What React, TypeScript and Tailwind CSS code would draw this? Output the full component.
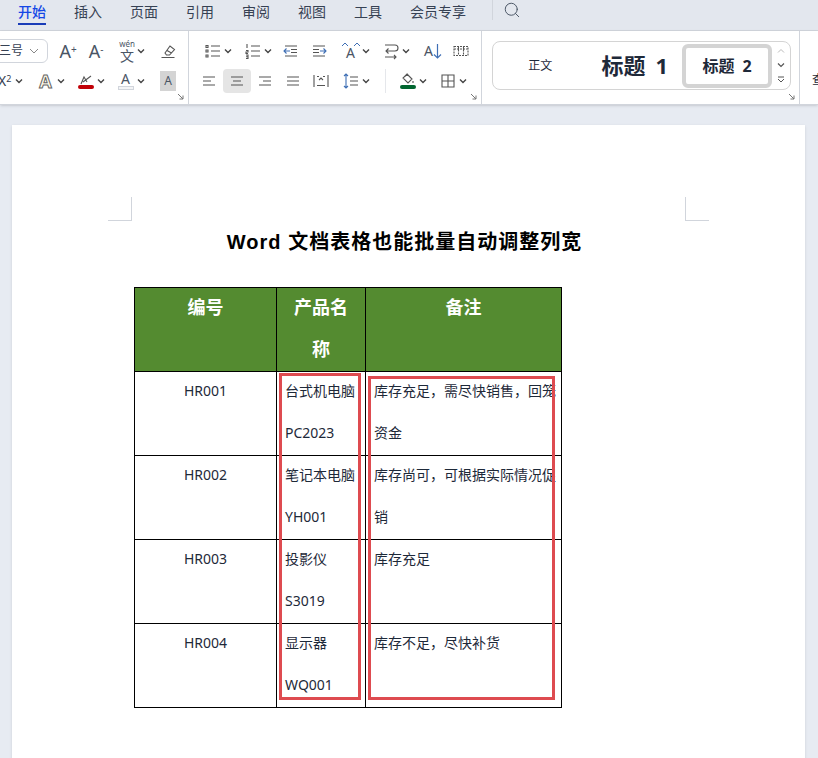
import type { ReactNode } from 'react'
import { Search } from 'lucide-react'

const tabs = ['插入', '页面', '引用', '审阅', '视图', '工具', '会员专享']

const rows = [
  { id: 'HR001', name: ['台式机电脑', 'PC2023'], note: ['库存充足，需尽快销售，回笼', '资金'] },
  { id: 'HR002', name: ['笔记本电脑', 'YH001'], note: ['库存尚可，可根据实际情况促', '销'] },
  { id: 'HR003', name: ['投影仪', 'S3019'], note: ['库存充足'] },
  { id: 'HR004', name: ['显示器', 'WQ001'], note: ['库存不足，尽快补货'] },
]

function Caret() {
  return (
    <svg width="8" height="8" viewBox="0 0 8 8" fill="none" stroke="#444" strokeWidth="1.4">
      <path d="M1 2.5 4 5.5 7 2.5" />
    </svg>
  )
}

function Glyph({ children }: { children: ReactNode }) {
  return (
    <svg width="18" height="18" viewBox="0 0 18 18" fill="none" stroke="#555" strokeWidth="1.1">
      {children}
    </svg>
  )
}

// icon with a small dropdown caret
function Drop({ children }: { children: ReactNode }) {
  return (
    <div className="flex w-10 items-center justify-center gap-px">
      <div className="flex h-5 w-5 items-center justify-center">{children}</div>
      <Caret />
    </div>
  )
}

function Tool({ children, active }: { children: ReactNode; active?: boolean }) {
  return (
    <div className={active ? 'flex h-6 w-7 items-center justify-center rounded bg-neutral-200' : 'flex h-6 w-7 items-center justify-center'}>
      {children}
    </div>
  )
}

function Lines({ d }: { d: string }) {
  return (
    <Glyph>
      <path d={d} />
    </Glyph>
  )
}

function Launcher() {
  return (
    <svg className="absolute right-1 bottom-1" width="7" height="7" viewBox="0 0 7 7" fill="none" stroke="#777" strokeWidth="1">
      <path d="M1 1 6 6M6 2.5V6H2.500" />
    </svg>
  )
}

function Ribbon() {
  return (
    <div className="flex h-[74px] overflow-hidden border-b border-gray-300 bg-white shadow-sm">
      {/* font group */}
      <div className="relative flex w-[189px] shrink-0 flex-col gap-1.5 border-r border-gray-300 pt-2">
        <div className="flex h-6 items-center">
          <div className="-ml-4 flex h-6 w-16 items-center justify-between rounded-md border border-gray-300 pl-3.5 pr-2 text-xs text-gray-700">
            <span>三号</span>
            <svg width="10" height="10" viewBox="0 0 10 10" fill="none" stroke="#888" strokeWidth="1">
              <path d="M1 3 5 7 9 3" />
            </svg>
          </div>
          <div className="ml-1.5 flex">
            <Tool>
              <span className="text-lg leading-6 text-gray-600">A<sup className="text-[10px]">+</sup></span>
            </Tool>
            <Tool>
              <span className="text-lg leading-6 text-gray-600">A<sup className="text-[10px]">-</sup></span>
            </Tool>
          </div>
          <div className="flex w-11 items-center justify-center gap-0.5">
            <div className="flex flex-col items-center text-gray-600">
              <span className="text-[8px] leading-2">wén</span>
              <span className="pt-px text-sm leading-3.5">文</span>
            </div>
            <Caret />
          </div>
          <Tool>
            <Glyph>
              <path d="M6 11 11 4 15.500 7.500 10.500 13H7.500ZM8 8.500 12.500 11M2.500 15.500H15.500" />
            </Glyph>
          </Tool>
        </div>
        <div className="flex h-6 items-center">
          <div className="-ml-0.5 flex w-8 items-center gap-1 text-gray-700">
            <span className="text-sm">X<sup className="text-[9px]">2</sup></span>
            <Caret />
          </div>
          <Drop>
            <span className="text-lg font-bold text-amber-50 [-webkit-text-stroke:1px_#666]">A</span>
          </Drop>
          <Drop>
            <div className="flex flex-col items-center">
              <svg width="16" height="11" viewBox="0 0 16 11" fill="none" stroke="#555" strokeWidth="1.1">
                <path d="M3 10 6 3 9 8M5 8 13 2" />
              </svg>
              <div className="h-1 w-4 rounded-sm bg-red-700" />
            </div>
          </Drop>
          <Drop>
            <div className="flex flex-col items-center leading-none">
              <span className="text-sm leading-3.5 text-gray-600">A</span>
              <div className="h-1 w-4 border border-gray-300 bg-gray-100" />
            </div>
          </Drop>
          <div className="ml-1 flex h-5 w-7 items-center justify-center">
            <span className="flex h-5 w-4 items-center justify-center bg-neutral-300 text-xs text-gray-600">A</span>
          </div>
        </div>
        <Launcher />
      </div>

      {/* paragraph group */}
      <div className="relative flex w-[293px] shrink-0 flex-col gap-1.5 border-r border-gray-300 pl-2 pt-2">
        <div className="flex h-6 items-center">
          <Drop>
            <Lines d="M7 4H16M7 9H16M7 14H16M2 3.500H4V5.500H2ZM2 8H4V10H2ZM2 13H4V15H2Z" />
          </Drop>
          <Drop>
            <Glyph>
              <path d="M7 4H16M7 9H16M7 14H16M3 2V6M2 8.500H4V10H2V11.500H4M2 13H4V16.500H2M2 14.700H4" />
            </Glyph>
          </Drop>
          <Tool>
            <Glyph>
              <path d="M3 4H15M9 7.500H15M9 10.500H15M3 14H15" />
              <path d="M8 9H2M4.500 6.500 2 9 4.500 11.500" stroke="#3f6fb5" />
            </Glyph>
          </Tool>
          <Tool>
            <Glyph>
              <path d="M3 4H15M3 7.500H9M3 10.500H9M3 14H15" />
              <path d="M10 9H16M13.500 6.500 16 9 13.500 11.500" stroke="#3f6fb5" />
            </Glyph>
          </Tool>
          <div className="ml-0.5 flex">
            <Drop>
              <div className="relative flex h-5 w-5 items-end justify-center">
                <span className="text-sm leading-4 text-gray-600">A</span>
                <svg className="absolute top-0 left-0" width="20" height="7" viewBox="0 0 20 7" fill="none" stroke="#3f6fb5" strokeWidth="1">
                  <path d="M1 5 4 2 7 5M13 5 16 2 19 5" />
                </svg>
              </div>
            </Drop>
            <Drop>
              <Lines d="M3 3H13Q16 3 16 6T13 9H4M6.500 6.500 4 9 6.500 11.500M3 15H14M12 13 14 15 12 17" />
            </Drop>
          </div>
          <div className="ml-1 flex">
            <Tool>
              <div className="flex items-center">
                <span className="text-sm text-gray-600">A</span>
                <svg width="9" height="16" viewBox="0 0 9 16" fill="none" stroke="#3f6fb5" strokeWidth="1.2">
                  <path d="M4.500 1V15M1 11.500 4.500 15 8 11.500" />
                </svg>
              </div>
            </Tool>
            <Tool>
              <Glyph>
                <path d="M2 4.500H16V13.500H2ZM2 7H16M6.500 4.500V13.500M11.500 4.500V13.500" strokeDasharray="2 1" />
              </Glyph>
            </Tool>
          </div>
        </div>
        <div className="flex h-6 items-center">
          <div className="-ml-0.5 flex">
            <Tool>
              <Lines d="M3 5H15M3 9H11M3 13H15" />
            </Tool>
            <Tool active>
              <Lines d="M3 5H15M5 9H13M3 13H15" />
            </Tool>
            <Tool>
              <Lines d="M3 5H15M7 9H15M3 13H15" />
            </Tool>
            <Tool>
              <Lines d="M3 5H15M3 9H15M3 13H15" />
            </Tool>
            <Tool>
              <Lines d="M2 3V15M16 3V15M5 13.500H13M5 4.500H7M11 4.500H13M7 8 9 6 11 8" />
            </Tool>
          </div>
          <Drop>
            <Glyph>
              <path d="M8 5H16M8 9H16M8 13H16" />
              <path d="M4 2V16M2 4 4 2 6 4M2 14 4 16 6 14" stroke="#3f6fb5" />
            </Glyph>
          </Drop>
          <div className="ml-2.5 h-6 border-l border-gray-200" />
          <div className="ml-1.5 flex">
            <Drop>
              <div className="flex flex-col items-center">
                <svg width="16" height="12" viewBox="0 0 16 12" fill="none" stroke="#555" strokeWidth="1.1">
                  <path d="M7 1 12 6 8 10 3 5ZM4 4 8 1M13 8V10" />
                </svg>
                <div className="h-1 w-4 rounded-sm bg-green-800" />
              </div>
            </Drop>
            <Drop>
              <Lines d="M3 3H15V15H3ZM9 3V15M3 9H15" />
            </Drop>
          </div>
        </div>
        <Launcher />
      </div>

      {/* styles group */}
      <div className="relative flex w-[318px] shrink-0 border-r border-gray-300 pl-2.5 pt-2.5 pb-3.5">
        <div className="flex w-[299px] items-center rounded-lg border border-neutral-300">
          <div className="flex flex-1 justify-center text-xs text-gray-800">正文</div>
          <div className="flex flex-1 justify-center gap-2.5 text-[22px] font-bold text-gray-800">
            <span>标题</span>
            <span>1</span>
          </div>
          <div className="flex h-11 w-[90px] items-center justify-center gap-2 rounded-md border-4 border-neutral-300 text-base font-bold text-gray-800">
            <span>标题</span>
            <span>2</span>
          </div>
          <div className="flex w-[18px] flex-col items-center gap-2">
            <svg width="8" height="6" viewBox="0 0 8 6" fill="none" stroke="#bbb" strokeWidth="1">
              <path d="M1 4.500 4 1.500 7 4.500" />
            </svg>
            <svg width="8" height="6" viewBox="0 0 8 6" fill="none" stroke="#555" strokeWidth="1.200">
              <path d="M1 1.500 4 4.500 7 1.500" />
            </svg>
            <svg width="8" height="7" viewBox="0 0 8 7" fill="none" stroke="#555" strokeWidth="1">
              <path d="M1 1H7M1 3 4 6 7 3" />
            </svg>
          </div>
        </div>
        <Launcher />
      </div>
      <div className="flex items-center pl-3 pt-6 text-xs text-gray-800">查</div>
    </div>
  )
}

// one line of a cell, a 42px row in the document with the text sitting a little high
function CellLine({ children }: { children: ReactNode }) {
  return <div className="h-[41.5px] leading-9.5">{children}</div>
}

function DocTable() {
  return (
    <div className="relative w-[428px]">
      <table className="w-full table-fixed border-collapse border border-black text-sm text-gray-800">
        <thead>
          <tr className="bg-[#548b30] text-lg font-bold whitespace-nowrap text-white">
            <th className="w-[142px] border border-black align-top">
              <CellLine>编号</CellLine>
            </th>
            <th className="w-[89px] border border-black align-top">
              <CellLine>产品名</CellLine>
              <CellLine>称</CellLine>
            </th>
            <th className="border border-black align-top">
              <CellLine>备注</CellLine>
            </th>
          </tr>
        </thead>
        <tbody>
          {rows.map((row) => (
            <tr key={row.id}>
              <td className="h-21 border border-black text-center align-top">
                <CellLine>{row.id}</CellLine>
              </td>
              <td className="border border-black px-2 align-top whitespace-nowrap">
                {row.name.map((line) => (
                  <CellLine key={line}>{line}</CellLine>
                ))}
              </td>
              <td className="border border-black px-2 align-top whitespace-nowrap">
                {row.note.map((line) => (
                  <CellLine key={line}>{line}</CellLine>
                ))}
              </td>
            </tr>
          ))}
        </tbody>
      </table>
      {/* red annotation boxes */}
      <div className="absolute top-[86px] left-[145px] h-[327px] w-[82px] border-3 border-[#de4b50]" />
      <div className="absolute top-[89px] left-[234px] h-[324px] w-[187px] border-3 border-[#de4b50]" />
    </div>
  )
}

export default function App() {
  return (
    <div className="h-screen overflow-hidden bg-[#e7ebf2] [font-family:'Noto_Sans','Noto_Sans_CJK_SC',sans-serif]">
      <div className="flex h-[31px] items-start gap-7 border-b border-gray-300 bg-[#e3e7ee] pl-4.5 text-sm text-gray-700">
        <div className="flex h-[25px] items-center border-b-2 border-blue-800 font-medium text-blue-700">开始</div>
        {tabs.map((tab) => (
          <div key={tab} className="flex h-6 items-center">
            {tab}
          </div>
        ))}
        <div className="-ml-0.5 flex h-5 items-center border-l border-gray-300 pl-2.5">
          <Search size={18} strokeWidth={1.3} className="text-gray-600" />
        </div>
      </div>
      <Ribbon />
      <div className="mt-5 ml-3 h-full w-[793px] bg-white px-24 pt-18 shadow-sm">
        <div className="flex justify-between">
          <div className="h-6 w-6 border-r border-b border-gray-300" />
          <div className="h-6 w-6 border-b border-l border-gray-300" />
        </div>
        <div className="pt-1.5 pr-2 text-center text-xl leading-7.5 font-bold tracking-wider text-black [font-family:'Liberation_Sans','Noto_Sans_CJK_SC',sans-serif]">
          Word 文档表格也能批量自动调整列宽
        </div>
        <div className="mt-7.5 ml-6.5">
          <DocTable />
        </div>
      </div>
    </div>
  )
}
